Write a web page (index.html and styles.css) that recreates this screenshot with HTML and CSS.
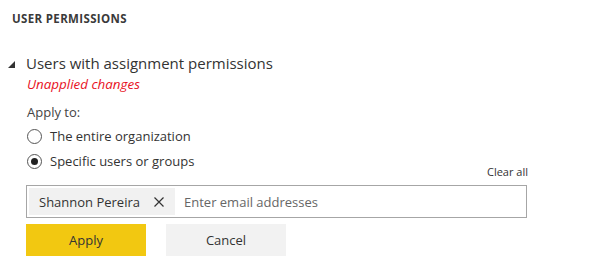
FILE: index.html
```html
<!DOCTYPE html>
<html lang="en">
<head>
    <meta charset="UTF-8">
    <title>User Permissions</title>
    <link rel="stylesheet" href="styles.css">
</head>
<body>
    <div class="panel">
        <h2 class="section-title">USER PERMISSIONS</h2>

        <!-- Collapsible group -->
        <div class="group">
            <div class="group-head">
                <svg class="caret" width="7" height="7" viewBox="0 0 7 7"><polygon points="7,0 7,7 0,7" fill="#333"/></svg>
                <span class="group-title">Users with assignment permissions</span>
            </div>
            <div class="unapplied">Unapplied changes</div>

            <div class="apply-label">Apply to:</div>
            <label class="radio-row">
                <span class="radio"></span>
                The entire organization
            </label>
            <label class="radio-row">
                <span class="radio checked"></span>
                Specific users or groups
            </label>

            <div class="clear-row"><span class="clear-all">Clear all</span></div>
            <div class="people-box">
                <span class="chip">Shannon Pereira
                    <svg class="chip-x" width="10" height="10" viewBox="0 0 10 10"><path d="M0.5 0.5 L9.5 9.5 M9.5 0.5 L0.5 9.5" stroke="#333" stroke-width="1.2"/></svg>
                </span>
                <span class="placeholder">Enter email addresses</span>
            </div>

            <div class="actions">
                <button class="btn btn-apply">Apply</button>
                <button class="btn btn-cancel">Cancel</button>
            </div>
        </div>
    </div>
</body>
</html>
```

FILE: styles.css
```css
body {
    margin: 0;
    font-family: "Open Sans", "Noto Sans", sans-serif;
    color: #333;
    background: #fff;
}

.panel {
    padding: 10px 0 0 0;
}

.section-title {
    margin: 0 0 0 12px;
    font-size: 11.5px;
    font-weight: 700;
    letter-spacing: 0.35px;
    color: #3a3a3a;
    line-height: 17px;
}

.group {
    padding: 26px 0 0 0;
}

.group-head {
    display: flex;
    align-items: center;
    height: 20px;
}

.caret {
    margin: 3px 11px 0 8px;
}

.group-title {
    font-size: 15px;
    line-height: 20px;
    color: #333;
}

.unapplied {
    margin: 3px 0 0 27px;
    font-size: 13.4px;
    font-style: italic;
    color: #e81123;
    line-height: 16px;
}

.apply-label {
    margin: 11px 0 2px 27px;
    font-size: 13px;
    color: #444;
    line-height: 18px;
}

.radio-row {
    display: flex;
    align-items: center;
    margin: 5px 0 0 27px;
    height: 20px;
    font-size: 13px;
    color: #333;
}

.radio {
    box-sizing: border-box;
    width: 15px;
    height: 15px;
    border: 1px solid #555;
    border-radius: 50%;
    margin-right: 8px;
    display: flex;
    align-items: center;
    justify-content: center;
}

.radio.checked::after {
    content: "";
    width: 7px;
    height: 7px;
    border-radius: 50%;
    background: #222;
}

.clear-row {
    width: 528px;
    display: flex;
    justify-content: flex-end;
    margin-top: -7px;
}

.clear-all {
    font-size: 11px;
    color: #333;
    line-height: 16px;
}

.people-box {
    box-sizing: border-box;
    display: flex;
    align-items: center;
    width: 501px;
    height: 33px;
    margin: 5px 0 0 26px;
    padding: 2px;
    border: 1px solid #a6a6a6;
}

.chip {
    display: flex;
    align-items: center;
    height: 27px;
    padding: 0 11px 0 10px;
    background: #f1f1f1;
    font-size: 13px;
    color: #333;
}

.chip-x {
    margin-left: 14px;
}

.placeholder {
    margin-left: 9px;
    font-size: 13px;
    color: #666;
}

.actions {
    display: flex;
    gap: 20px;
    margin: 6px 0 0 26px;
}

.btn {
    width: 120px;
    height: 32px;
    border: none;
    font-family: inherit;
    font-size: 13px;
    color: #333;
    padding: 0;
}

.btn-apply {
    background: #f2c811;
}

.btn-cancel {
    background: #f2f2f2;
}
```
